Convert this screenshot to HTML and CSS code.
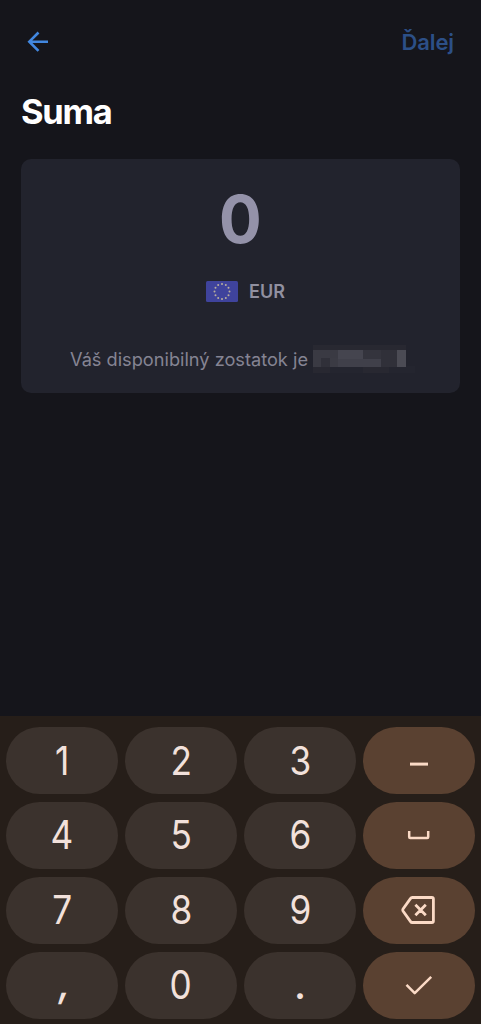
FILE: index.html
```
<!DOCTYPE html>
<html lang="sk">
<head>
<meta charset="utf-8">
<meta name="viewport" content="width=device-width, initial-scale=1">
<title>Suma</title>
<link rel="stylesheet" href="styles.css">
</head>
<body>
<main class="screen">
  <header class="topbar">
    <svg class="back" viewBox="0 0 24 24" aria-label="Späť"><path d="M22 11.7H3M12.5 2.5L3.3 11.7l9.2 9.2"/></svg>
    <span class="next">Ďalej</span>
  </header>
  <h1 class="title">Suma</h1>
  <section class="card">
    <div class="amount">0</div>
    <div class="currency">
      <svg class="flag" viewBox="0 0 32 21"><rect width="32" height="21" rx="1.5" fill="#3f439c"/><g fill="#b9af9d"><circle cx="16" cy="3" r="1"/><circle cx="19.8" cy="4" r="1"/><circle cx="22.5" cy="6.8" r="1"/><circle cx="23.5" cy="10.5" r="1"/><circle cx="22.5" cy="14.2" r="1"/><circle cx="19.8" cy="17" r="1"/><circle cx="16" cy="18" r="1"/><circle cx="12.2" cy="17" r="1"/><circle cx="9.5" cy="14.2" r="1"/><circle cx="8.5" cy="10.5" r="1"/><circle cx="9.5" cy="6.8" r="1"/><circle cx="12.2" cy="4" r="1"/></g></svg>
      <span class="code">EUR</span>
    </div>
    <div class="balance">
      <span class="label">Váš disponibilný zostatok je</span>
      <svg class="mosaic" viewBox="0 0 102 32" shape-rendering="crispEdges">
        <path fill="#282831" d="M0 2h93v28H0z"/>
        <path fill="#24252f" d="M17 23h33v7H17zM76 23h26v7H76z"/>
        <path fill="#3a3a43" d="M0 7h25v8H0zM0 15h8v9H0z"/>
        <path fill="#303039" d="M8 15h9v9H8zM68 7h16v17H68z"/>
        <path fill="#3b3b44" d="M17 15h8v9h-8z"/>
        <path fill="#45454f" d="M25 7h25v9H25z"/>
        <path fill="#40404a" d="M25 16h43v8H25z"/>
        <path fill="#34343d" d="M50 7h18v9H50z"/>
        <path fill="#4b4b54" d="M84 7h9v17h-9z"/>
      </svg>
    </div>
  </section>
  <section class="keypad">
    <div class="key"><span class="digit">1</span></div>
    <div class="key"><span class="digit">2</span></div>
    <div class="key"><span class="digit">3</span></div>
    <div class="key action"><svg class="icon" viewBox="0 0 40 40"><path d="M11 23.1h18" stroke-width="3"/></svg></div>
    <div class="key"><span class="digit">4</span></div>
    <div class="key"><span class="digit">5</span></div>
    <div class="key"><span class="digit">6</span></div>
    <div class="key action"><svg class="icon" viewBox="0 0 40 40"><path d="M10.2 16v6q0 1 1 1h17q1 0 1-1v-6" stroke-width="2.5"/></svg></div>
    <div class="key"><span class="digit">7</span></div>
    <div class="key"><span class="digit">8</span></div>
    <div class="key"><span class="digit">9</span></div>
    <div class="key action"><svg class="icon" viewBox="0 0 40 40"><path d="M13.2 7.5h19.6q1.6 0 1.6 1.6v21.8q0 1.6-1.6 1.6H13.2q-1 0-1.6-.9L4 21q-.6-1 0-2l7.6-10.6q.6-.9 1.6-.9zM16.4 14.8l10.4 10.4M26.8 14.8L16.4 25.2" stroke-width="2.8"/></svg></div>
    <div class="key"><span class="digit comma">,</span></div>
    <div class="key"><span class="digit">0</span></div>
    <div class="key"><span class="digit dot">.</span></div>
    <div class="key action"><svg class="icon" viewBox="0 0 40 40"><path d="M7.5 19.8l8.2 8.4L32.2 11.8" stroke-width="2.5"/></svg></div>
  </section>
</main>
</body>
</html>
```
FILE: styles.css
```
* { box-sizing: border-box; }
body {
  margin: 0;
  background: #15151b;
  font-family: Inter, "Liberation Sans", sans-serif;
}
.screen {
  display: flex;
  flex-direction: column;
  height: 1024px;
  overflow: hidden;
}
.topbar {
  display: flex;
  justify-content: space-between;
  align-items: center;
  height: 83px;
  padding: 0 27px 0 26px;
}
.back {
  width: 24px;
  height: 24px;
  fill: none;
  stroke: #4287df;
  stroke-width: 2.6;
}
.next {
  color: #2c4f87;
  font-size: 22px;
  font-weight: 600;
  line-height: 28px;
  letter-spacing: -0.1px;
}
.title {
  margin: 8px 0 0 21px;
  color: #fff;
  font-size: 34.5px;
  font-weight: 700;
  line-height: 42px;
  letter-spacing: -1.3px;
}
.card {
  display: flex;
  flex-direction: column;
  align-items: center;
  height: 234px;
  margin: 26px 21px 0;
  padding-top: 24px;
  border-radius: 10px;
  background: #22232d;
}
.amount {
  color: #9492a9;
  font-size: 66px;
  font-weight: 700;
  line-height: 72px;
  transform: scaleX(0.96);
}
.currency {
  display: flex;
  align-items: center;
  gap: 11px;
  height: 24px;
  margin-top: 24px;
  padding-left: 10px;
}
.flag { width: 32px; height: 21px; }
.code {
  color: #9190a0;
  font-size: 18px;
  font-weight: 600;
}
.balance {
  display: flex;
  align-items: center;
  gap: 5px;
  height: 32px;
  margin-top: 40px;
  padding-left: 4px;
}
.label {
  color: #858493;
  font-size: 18.2px;
  white-space: nowrap;
}
.mosaic { width: 102px; height: 32px; }
.keypad {
  display: grid;
  grid-template-columns: repeat(4, 1fr);
  grid-auto-rows: 67px;
  gap: 7.9px 6.4px;
  height: 308px;
  margin-top: auto;
  padding: 11px 6px 0;
  background: #261e19;
}
.key {
  display: flex;
  align-items: center;
  justify-content: center;
  border-radius: 34px;
  background: #3b322d;
  color: #f2e1db;
}
.digit {
  font-size: 40px;
  line-height: 48px;
  transform: scaleX(0.88);
}
.comma {
  font-weight: 500;
  transform: translate(3px, -2px) skewX(-9deg);
}
.dot {
  font-family: Lato, sans-serif;
  font-weight: 700;
  font-size: 38px;
  transform: translateY(-1px);
}
.action { background: #5a4131; color: #fbdac6; }
.icon {
  width: 40px;
  height: 40px;
  fill: none;
  stroke: currentColor;
  stroke-linejoin: round;
}
```
